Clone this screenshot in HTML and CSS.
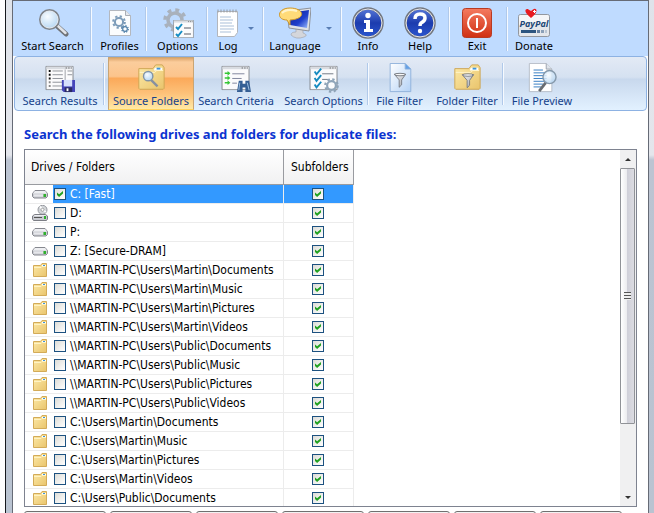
FILE: index.html
```html
<!DOCTYPE html>
<html lang="en">
<head>
<meta charset="utf-8">
<title>Source Folders</title>
<link rel="stylesheet" href="styles.css">
</head>
<body>
<svg class="defs" aria-hidden="true">
  <defs>
    <linearGradient id="gFolder" x1="0" y1="0" x2="1" y2="1"><stop offset="0" stop-color="#fdeaa8"/><stop offset="1" stop-color="#e9c46c"/></linearGradient>
    <linearGradient id="gBlue" x1="0" y1="0" x2="0" y2="1"><stop offset="0" stop-color="#5878d8"/><stop offset=".5" stop-color="#1c3cae"/><stop offset="1" stop-color="#2b57d0"/></linearGradient>
    <linearGradient id="gSteel" x1="0" y1="0" x2="1" y2="1"><stop offset="0" stop-color="#f2f3f5"/><stop offset="1" stop-color="#a3a7af"/></linearGradient>
    <linearGradient id="gRed" x1="0" y1="0" x2="0" y2="1"><stop offset="0" stop-color="#f47b60"/><stop offset="1" stop-color="#d02f12"/></linearGradient>
    <linearGradient id="gScreen" x1="0" y1="0" x2="1" y2="1"><stop offset="0" stop-color="#0a1a90"/><stop offset=".6" stop-color="#2040cc"/><stop offset="1" stop-color="#a0c0ff"/></linearGradient>
    <linearGradient id="gPage" x1="0" y1="0" x2="1" y2="1"><stop offset="0" stop-color="#ffffff"/><stop offset="1" stop-color="#b4d2f6"/></linearGradient>
    <radialGradient id="gLens" cx=".4" cy=".35" r=".7"><stop offset="0" stop-color="#f8fcff"/><stop offset="1" stop-color="#b2d4f2"/></radialGradient>
    <symbol id="drive" viewBox="0 0 16 16"><path d="M3 4.500h10l2.500 3v3l-1.500 1.500H2L.5 10.500v-3z" fill="#c9cbd1" stroke="#86888f"/><path d="M3 5h10l2 2.500H1z" fill="#eeeff2"/><path d="M2 8.500h9v2H2z" fill="#e6e7eb"/><path d="M11.500 8h2.500v3h-2.500z" fill="#2fb02d"/></symbol>
    <symbol id="disc" viewBox="0 0 16 16"><circle cx="10.500" cy="4.800" r="4.500" fill="#d3d6d9" stroke="#97999f"/><path d="M10.500 4.800 8 1.500M10.500 4.800l3.500 2" stroke="#fff" stroke-width="1.500"/><circle cx="10.500" cy="4.800" r="1.500" fill="#fff" stroke="#777" stroke-width=".6"/><path d="M2.500 9.500h11l2 1.500v3l-1 1.500h-13l-1-1.500v-3z" fill="#c9cbd1" stroke="#7c7e85"/><path d="M3 10h10l1 1H2z" fill="#eeeff2"/><path d="M2 12h8v1H2z" fill="#555"/><path d="M12 11h2v3h-2z" fill="#2fb02d"/></symbol>
    <symbol id="folder" viewBox="0 0 16 16"><path d="M1.500 3.500h7l1.500-2h4.500v13h-13z" fill="url(#gFolder)" stroke="#d3ab58"/><path d="M10 3.500h4" stroke="#fff"/><path d="M11 3.500h2" stroke="#3c92dc"/><path d="M2 5.500h7l1-1h4" stroke="#fff3c4" fill="none"/></symbol>
    <symbol id="gear" viewBox="0 0 24 24"><circle cx="12" cy="12" r="10" fill="none" stroke="currentColor" stroke-width="3.500" stroke-dasharray="3.850 4"/><circle cx="12" cy="12" r="7" fill="none" stroke="currentColor" stroke-width="3.500"/></symbol>
    <symbol id="bigfolder" viewBox="0 0 32 32"><path d="M3 6h15l3-4h7l2 3v22l-1 1H4l-1-1z" fill="url(#gFolder)" stroke="#cda553"/><path d="M20 5h8v3h-9z" fill="#fff"/><path d="M22 5h4v2h-4z" fill="#3d94d9"/><path d="M4 10h16l2-2h7" stroke="#fff4cb" fill="none"/></symbol>
    <symbol id="funnel" viewBox="0 0 16 18"><path d="M1 2h14L10 9v6l-3 3V9z" fill="url(#gSteel)" stroke="#6c727a"/><ellipse cx="8" cy="2.500" rx="6.500" ry="1.500" fill="#f8f8f8" stroke="#686d74"/></symbol>
    <symbol id="window" viewBox="0 0 32 28"><path d="M.5.5h31v27H.5z" fill="#fbfbfc" stroke="#777b82"/><path d="M1 1h30v3H1z" fill="#d9dce1"/><path d="M23 2.500h1.500m1.500 0h1.500m1.500 0h1" stroke="#555"/></symbol>
  </defs>
</svg>
<div class="desktop">
<main class="window">
  <nav class="toolbar main-bar" aria-label="Main">
    <button class="tool divided"><svg viewBox="0 0 32 32"><path d="M20 19l9 8" stroke="#6f7277" stroke-width="5" stroke-linecap="round"/><path d="M20.500 18.500l8 7.500" stroke="#e2e4e8" stroke-width="2.500" stroke-linecap="round"/><circle cx="12.500" cy="12.500" r="9.500" fill="url(#gLens)" stroke="#7f848b" stroke-width="2"/><circle cx="12.500" cy="12.500" r="8.500" fill="none" stroke="#e9eef4"/></svg><span>Start Search</span></button>
    <button class="tool divided"><svg viewBox="0 0 32 32"><path d="M5.500 3.500h16l5 5v20h-21z" fill="#fbfcfd" stroke="#b4b8bf"/><path d="M21.500 3.500v5h5" fill="#e3e7ed" stroke="#a8adb5"/><g color="#7d9cb9"><use href="#gear" x="8" y="8" width="14" height="14"/></g><g color="#4f7fa8"><use href="#gear" x="17" y="18" width="8" height="8"/></g></svg><span>Profiles</span></button>
    <button class="tool divided"><svg viewBox="0 0 32 32"><g color="#a9b1bc"><use href="#gear" x="1" y="1" width="24" height="24"/></g><use href="#window" x="11" y="13" width="21" height="18"/><path d="M14 20l2 2 4-5M14 27l2 2 4-5" fill="none" stroke="#168dc4" stroke-width="2"/><path d="M22 21h7m-7 6h7" stroke="#555b66"/></svg><span>Options</span></button>
    <div class="split divided"><button class="tool"><svg viewBox="0 0 32 32"><path d="M5.500 4.500h20v21l-3 4h-17z" fill="#fff" stroke="#b3b6bc"/><path d="M6 2.500v3m3-3v3m3-3v3m3-3v3m3-3v3m3-3v3m3-3v3" stroke="#94999f"/><path d="M8 10h11M8 13h13M8 16h12M8 19h14M8 22h14M8 25h11" stroke="#a9bfd9"/></svg><span>Log</span></button><button class="drop" aria-label="Log menu"></button></div>
    <div class="split divided"><button class="tool"><svg viewBox="0 0 32 32"><path d="M12 28q0-3 5-3v-4l7 1v4q6 2 1 4-8 3-13-2z" fill="#d4d6db" stroke="#9da0a6" stroke-width=".6"/><path d="M8 4l24-3-2 23-20-3z" fill="#dfe2e6" stroke="#8e9299"/><path d="M10 6l20-3-2 18-17-3z" fill="url(#gScreen)"/><path d="M11 1C-2 1-3 13 8 13l3 5v-5C28 12 25 1 11 1z" fill="#ffdb78" stroke="#cf982b"/><path d="M3 6q5-5 15-2" stroke="#fff4ca" stroke-width="2" fill="none"/></svg><span>Language</span></button><button class="drop" aria-label="Language menu"></button></div>
    <button class="tool"><svg viewBox="0 0 32 32"><circle cx="16" cy="16" r="14.500" fill="url(#gBlue)" stroke="#73777f" stroke-width="2.500"/><circle cx="16" cy="16" r="14" fill="none" stroke="#e6e8ed"/><circle cx="16" cy="8.500" r="2.700" fill="#fff"/><path d="M12 13h6v9h3v3h-9v-3h2v-6h-2z" fill="#fff"/></svg><span>Info</span></button>
    <button class="tool divided help"><svg viewBox="0 0 32 32"><circle cx="16" cy="16" r="14.500" fill="url(#gBlue)" stroke="#73777f" stroke-width="2.500"/><circle cx="16" cy="16" r="14" fill="none" stroke="#e6e8ed"/><path d="M11 12q0-5 5-5 5 0 5 4 0 3-4 5-1 1-1 3" fill="none" stroke="#fff" stroke-width="3.500"/><circle cx="16" cy="24" r="2.200" fill="#fff"/></svg><span>Help</span></button>
    <button class="tool divided help"><svg viewBox="0 0 32 32"><rect x="1.500" y="1.500" width="29" height="29" rx="3" fill="url(#gRed)" stroke="#b83a22"/><circle cx="16" cy="16" r="9" fill="none" stroke="#fff" stroke-width="2"/><path d="M16 11v10" stroke="#fff" stroke-width="2"/></svg><span>Exit</span></button>
    <button class="tool"><svg viewBox="0 0 32 32"><rect x=".5" y="7.500" width="31" height="22" rx="2" fill="#e4e7eb" stroke="#92979f"/><path d="M1 10q0-2 2-2h26q2 0 2 2v8H1z" fill="#f5f6f8"/><path d="M13 11C4 4 8 1 10.500 2.500L13 4l2-1.500C18 0 22 4 13 11z" fill="#e81a20"/><path d="M15 4.500h3m-1.500-1.500v3" stroke="#fff"/><text x="16" y="20" class="pay">PayPal</text><path d="M3 23h15v3H3z" fill="#2c5580"/><path d="M19 23h3v3h-3z" fill="#627d9e"/><path d="M23 23h3v3h-3z" fill="#8ba0b8"/><path d="M27 23h2v3h-2z" fill="#bac6d3"/></svg><span>Donate</span></button>
  </nav>
  <nav class="toolbar sub-bar" aria-label="Views">
    <button class="tool divided"><svg viewBox="0 0 32 32"><use href="#window" x="0" y="3" width="31" height="26"/><path d="M21.500 7v20" stroke="#9a9da3"/><path d="M8 8.500h11M8 12.500h11M8 16.500h11M8 20.500h11M8 24.500h11M24 8.500h5M24 12.500h5" stroke="#8b8f96"/><path d="M4 8.500h2m-2 4h2m-2 4h2" stroke="#111" stroke-width="2"/><path d="M4 20.500h2m-2 4h2" stroke="#888" stroke-width="2"/><path d="M18 18h14v13H20l-2-2z" fill="#4444ba"/><path d="M20 18h9v7h-9z" fill="#d5defc"/><path d="M21 26h8v5h-8z" fill="#2a2a62"/><path d="M23 27h2v3h-2z" fill="#fff"/></svg><span>Search Results</span></button>
    <button class="tool active" aria-pressed="true"><svg viewBox="0 0 32 32"><use href="#bigfolder" width="32" height="32"/><path d="M16 18l7 7" stroke="#8790a0" stroke-width="2.500"/><circle cx="13" cy="14" r="5" fill="url(#gLens)" stroke="#8294a6" stroke-width="1.500"/></svg><span>Source Folders</span></button>
    <button class="tool"><svg viewBox="0 0 32 32"><use href="#window" x="0" y="3" width="31" height="26"/><path d="M4 11h4M4 16h4M4 21h4" stroke="#35c735" stroke-width="1.500"/><path d="M7 8.500l3 2.500-3 2.500zM7 13.500l3 2.500-3 2.500zM7 18.500l3 2.500-3 2.500z" fill="#35c735"/><path d="M12 11.500h13M12 16.500h10M12 21.500h5" stroke="#7c829a"/><path d="M19 19h4v3h3v-3h4l2 12h-6v-5h-3v5h-6z" fill="#355f94"/><path d="M20 21l-1 8m9-8 2 8" stroke="#a3c4e4"/></svg><span>Search Criteria</span></button>
    <button class="tool divided"><svg viewBox="0 0 32 32"><use href="#window" x="0" y="3" width="31" height="26"/><path d="M6 9l2 3 5-6M6 16l2 3 5-6M6 23l2 3 5-6" fill="none" stroke="#168bc0" stroke-width="2"/><path d="M14 11.500h12M14 17.500h8" stroke="#6d7480"/><g color="#8fa4b8"><use href="#gear" x="16" y="16" width="16" height="16"/></g></svg><span>Search Options</span></button>
    <button class="tool"><svg viewBox="0 0 32 32"><path d="M5.500.5h16l6 6v24h-22z" fill="url(#gPage)" stroke="#8fb1db"/><path d="M21.500.5v6h6" fill="#65a1e6" stroke="#8fb1db"/><use href="#funnel" x="9" y="9" width="14" height="18"/></svg><span>File Filter</span></button>
    <button class="tool divided"><svg viewBox="0 0 32 32"><use href="#bigfolder" width="32" height="32"/><use href="#funnel" x="10" y="10" width="14" height="17"/></svg><span>Folder Filter</span></button>
    <button class="tool"><svg viewBox="0 0 32 32"><path d="M2.500.5h18l6 6v24h-24z" fill="#fff" stroke="#b6bdc7"/><path d="M20.500.5v6h6" fill="#dfe4eb" stroke="#9aa2ad"/><path d="M7 7.500h10M7 10.500h14M7 13.500h14M7 16.500h14M7 19.500h14M7 22.500h10M7 25.500h8" stroke="#2f79c0"/><path d="M20 21l-7 9" stroke="#676c72" stroke-width="3"/><circle cx="24" cy="15" r="7" fill="url(#gLens)" fill-opacity=".85" stroke="#8699ab" stroke-width="1.500"/></svg><span>File Preview</span></button>
  </nav>
  <section class="content">
    <h1>Search the following drives and folders for duplicate files:</h1>
    <div class="list">
      <div class="rows">
      <table>
        <colgroup><col class="c-name"><col class="c-sub"></colgroup>
        <thead><tr><th scope="col">Drives / Folders</th><th scope="col">Subfolders</th></tr></thead>
        <tbody>
          <tr class="selected"><td><label><svg><use href="#drive"/></svg><span class="entry"><input type="checkbox" checked>C: [Fast]</span></label></td><td><input type="checkbox" checked aria-label="Subfolders"></td></tr>
          <tr><td><label><svg><use href="#disc"/></svg><span class="entry"><input type="checkbox">D:</span></label></td><td><input type="checkbox" checked aria-label="Subfolders"></td></tr>
          <tr><td><label><svg><use href="#drive"/></svg><span class="entry"><input type="checkbox">P:</span></label></td><td><input type="checkbox" checked aria-label="Subfolders"></td></tr>
          <tr><td><label><svg><use href="#drive"/></svg><span class="entry"><input type="checkbox">Z: [Secure-DRAM]</span></label></td><td><input type="checkbox" checked aria-label="Subfolders"></td></tr>
          <tr><td><label><svg><use href="#folder"/></svg><span class="entry"><input type="checkbox">\\MARTIN-PC\Users\Martin\Documents</span></label></td><td><input type="checkbox" checked aria-label="Subfolders"></td></tr>
          <tr><td><label><svg><use href="#folder"/></svg><span class="entry"><input type="checkbox">\\MARTIN-PC\Users\Martin\Music</span></label></td><td><input type="checkbox" checked aria-label="Subfolders"></td></tr>
          <tr><td><label><svg><use href="#folder"/></svg><span class="entry"><input type="checkbox">\\MARTIN-PC\Users\Martin\Pictures</span></label></td><td><input type="checkbox" checked aria-label="Subfolders"></td></tr>
          <tr><td><label><svg><use href="#folder"/></svg><span class="entry"><input type="checkbox">\\MARTIN-PC\Users\Martin\Videos</span></label></td><td><input type="checkbox" checked aria-label="Subfolders"></td></tr>
          <tr><td><label><svg><use href="#folder"/></svg><span class="entry"><input type="checkbox">\\MARTIN-PC\Users\Public\Documents</span></label></td><td><input type="checkbox" checked aria-label="Subfolders"></td></tr>
          <tr><td><label><svg><use href="#folder"/></svg><span class="entry"><input type="checkbox">\\MARTIN-PC\Users\Public\Music</span></label></td><td><input type="checkbox" checked aria-label="Subfolders"></td></tr>
          <tr><td><label><svg><use href="#folder"/></svg><span class="entry"><input type="checkbox">\\MARTIN-PC\Users\Public\Pictures</span></label></td><td><input type="checkbox" checked aria-label="Subfolders"></td></tr>
          <tr><td><label><svg><use href="#folder"/></svg><span class="entry"><input type="checkbox">\\MARTIN-PC\Users\Public\Videos</span></label></td><td><input type="checkbox" checked aria-label="Subfolders"></td></tr>
          <tr><td><label><svg><use href="#folder"/></svg><span class="entry"><input type="checkbox">C:\Users\Martin\Documents</span></label></td><td><input type="checkbox" checked aria-label="Subfolders"></td></tr>
          <tr><td><label><svg><use href="#folder"/></svg><span class="entry"><input type="checkbox">C:\Users\Martin\Music</span></label></td><td><input type="checkbox" checked aria-label="Subfolders"></td></tr>
          <tr><td><label><svg><use href="#folder"/></svg><span class="entry"><input type="checkbox">C:\Users\Martin\Pictures</span></label></td><td><input type="checkbox" checked aria-label="Subfolders"></td></tr>
          <tr><td><label><svg><use href="#folder"/></svg><span class="entry"><input type="checkbox">C:\Users\Martin\Videos</span></label></td><td><input type="checkbox" checked aria-label="Subfolders"></td></tr>
          <tr><td><label><svg><use href="#folder"/></svg><span class="entry"><input type="checkbox">C:\Users\Public\Documents</span></label></td><td><input type="checkbox" checked aria-label="Subfolders"></td></tr>
        </tbody>
      </table>
      </div>
      <div class="scrollbar">
        <button class="arrow up" aria-label="Scroll up"></button>
        <div class="track"><div class="thumb"><i></i></div></div>
        <button class="arrow down" aria-label="Scroll down"></button>
      </div>
    </div>
    <div class="actions"><button></button><button></button><button></button><button></button><button></button><button></button><button></button></div>
  </section>
</main>
</div>
</body>
</html>
```
FILE: styles.css
```css
* { box-sizing: border-box; }
body { margin: 0; background: #fdfdfe; overflow: hidden; }
button { font: inherit; color: inherit; background: none; border: 0; padding: 0; }
.defs { position: absolute; width: 0; height: 0; }

.desktop {
  height: 100vh;
  margin-left: 5px;
  padding: 0 5px 0 6px;
  border-left: 1px solid #15181d;
  background: linear-gradient(#dfe3ea, #e4e6ec 155px, #bcc4d2 160px, #b9c3d1);
}
.window {
  height: 100%;
  display: flex;
  flex-direction: column;
  border: 1px solid #666b76;
  border-bottom: 0;
  background: #fff;
}

.toolbar { display: grid; font: 11px/14px "Noto Sans", "Open Sans", sans-serif; white-space: nowrap; }
.main-bar {
  grid-template-columns: 79px 55px 61px 56px 78px 52px 56px 58px 52px;
  height: 55px;
  background: #bfdbff;
  color: #000;
}
.sub-bar {
  grid-template-columns: 90px 89px 84px 91px 61px 74px 76px;
  height: 55px;
  margin: 0 1px;
  border: 1px solid #8db2e3;
  border-radius: 4px;
  background: linear-gradient(#e3eaf5, #d5e1f1 38%, #c8d8ed 42%, #e2f1ff);
  color: #15428b;
}
.tool { position: relative; display: flex; flex-direction: column; align-items: center; min-width: 0; }
.tool svg { flex: none; }
.main-bar .tool { padding-top: 6px; }
.main-bar .tool svg { width: 32px; height: 32px; }
.sub-bar .tool { padding-top: 6px; }
.sub-bar .tool svg { width: 30px; height: 30px; margin-bottom: 1px; }
.divided { position: relative; }
.divided::after {
  content: "";
  position: absolute;
  right: 0;
  top: 6px;
  bottom: 5px;
  width: 2px;
  background: linear-gradient(90deg, #b0c9ea 50%, #f6faff 50%);
}
.main-bar .help { padding-right: 4px; }
.split { display: flex; }
.split .tool { flex: 1; }
.drop { width: 16px; display: grid; place-items: center start; }
.drop::before { content: ""; border: 3px solid transparent; border-top-color: #587db3; border-bottom: 0; }
.sub-bar .active {
  margin-left: 3px;
  padding-top: 5px;
  border: 1px solid #c9a574;
  border-bottom-color: #ffd25c;
  background: linear-gradient(#dda56b, #fbcd9c 8%, #fcc48c 36%, #fba95a 40%, #fdc27a 70%, #ffe9a4);
}
.pay { font: italic bold 9px "Noto Sans", sans-serif; fill: #1e4876; text-anchor: middle; }

.content {
  flex: 1;
  min-height: 0;
  display: flex;
  flex-direction: column;
  padding: 14px 11px 0;
  font: 12px/18px "DejaVu Sans Condensed", "DejaVu Sans", sans-serif;
  color: #000;
}
h1 { margin: 0 0 6px; font: bold 13px/18px "Noto Sans", "Open Sans", sans-serif; color: #0c34d0; }
.list { flex: 1; min-height: 0; display: flex; border: 1px solid #7e8390; }
.rows { flex: 1; min-width: 0; overflow: hidden; }
table { width: 329px; table-layout: fixed; border-spacing: 0; }
.c-name { width: 259px; }
.c-sub { width: 70px; }
th {
  height: 35px;
  padding: 0 6px;
  font-weight: normal;
  text-align: left;
  background: linear-gradient(#fff, #f1f1f2);
  border: solid #999ba0;
  border-width: 0 1px 1px 0;
}
th + th { padding-left: 7px; }
td { height: 19px; padding: 0; border: solid #ececec; border-width: 0 1px 1px 0; text-align: center; line-height: 18px; }
td > input { display: block; margin: 0 auto; }
label { display: flex; align-items: center; gap: 5px; padding-left: 7px; }
label svg { width: 16px; height: 16px; flex: none; }
.entry { flex: 1; display: flex; align-items: center; gap: 4px; padding-left: 1px; height: 18px; white-space: nowrap; }
.selected .entry, .selected td + td { background: #3399ff; color: #fff; }
input {
  appearance: none;
  flex: none;
  width: 12px;
  height: 12px;
  margin: 0;
  border: 1px solid #1c5180;
  background: linear-gradient(135deg, #dcdcd7, #fff);
}
input:checked::before {
  content: "";
  display: block;
  width: 6px;
  height: 6px;
  margin: 2px;
  background: #21a121;
  clip-path: polygon(0 25%, 35% 55%, 100% 0, 100% 40%, 35% 100%, 0 65%);
}
td + td input { margin-left: 28px; }

.scrollbar { width: 16px; display: flex; flex-direction: column; background: #f0f0f1; }
.arrow { height: 18px; display: grid; place-items: center; }
.arrow::before { content: ""; border: 3px solid transparent; }
.up::before { border-bottom-color: #333; border-top: 0; }
.down::before { border-top-color: #333; border-bottom: 0; }
.track { flex: 1; padding-right: 1px; }
.thumb {
  height: 80%;
  display: grid;
  place-items: center;
  border: 1px solid #909297;
  border-radius: 1px;
  background: linear-gradient(90deg, #fff, #ececef 45%, #d0d0d9 50%, #dcdce2);
}
.thumb i { width: 7px; height: 8px; background: repeating-linear-gradient(#555 0 1px, #eee 1px 3px); }

.actions { flex: none; display: flex; gap: 4px; height: 2px; margin-top: 4px; overflow: hidden; }
.actions button { width: 82px; height: 23px; flex: none; border: 1px solid #707070; border-radius: 3px; background: #f2f2f2; }
```
